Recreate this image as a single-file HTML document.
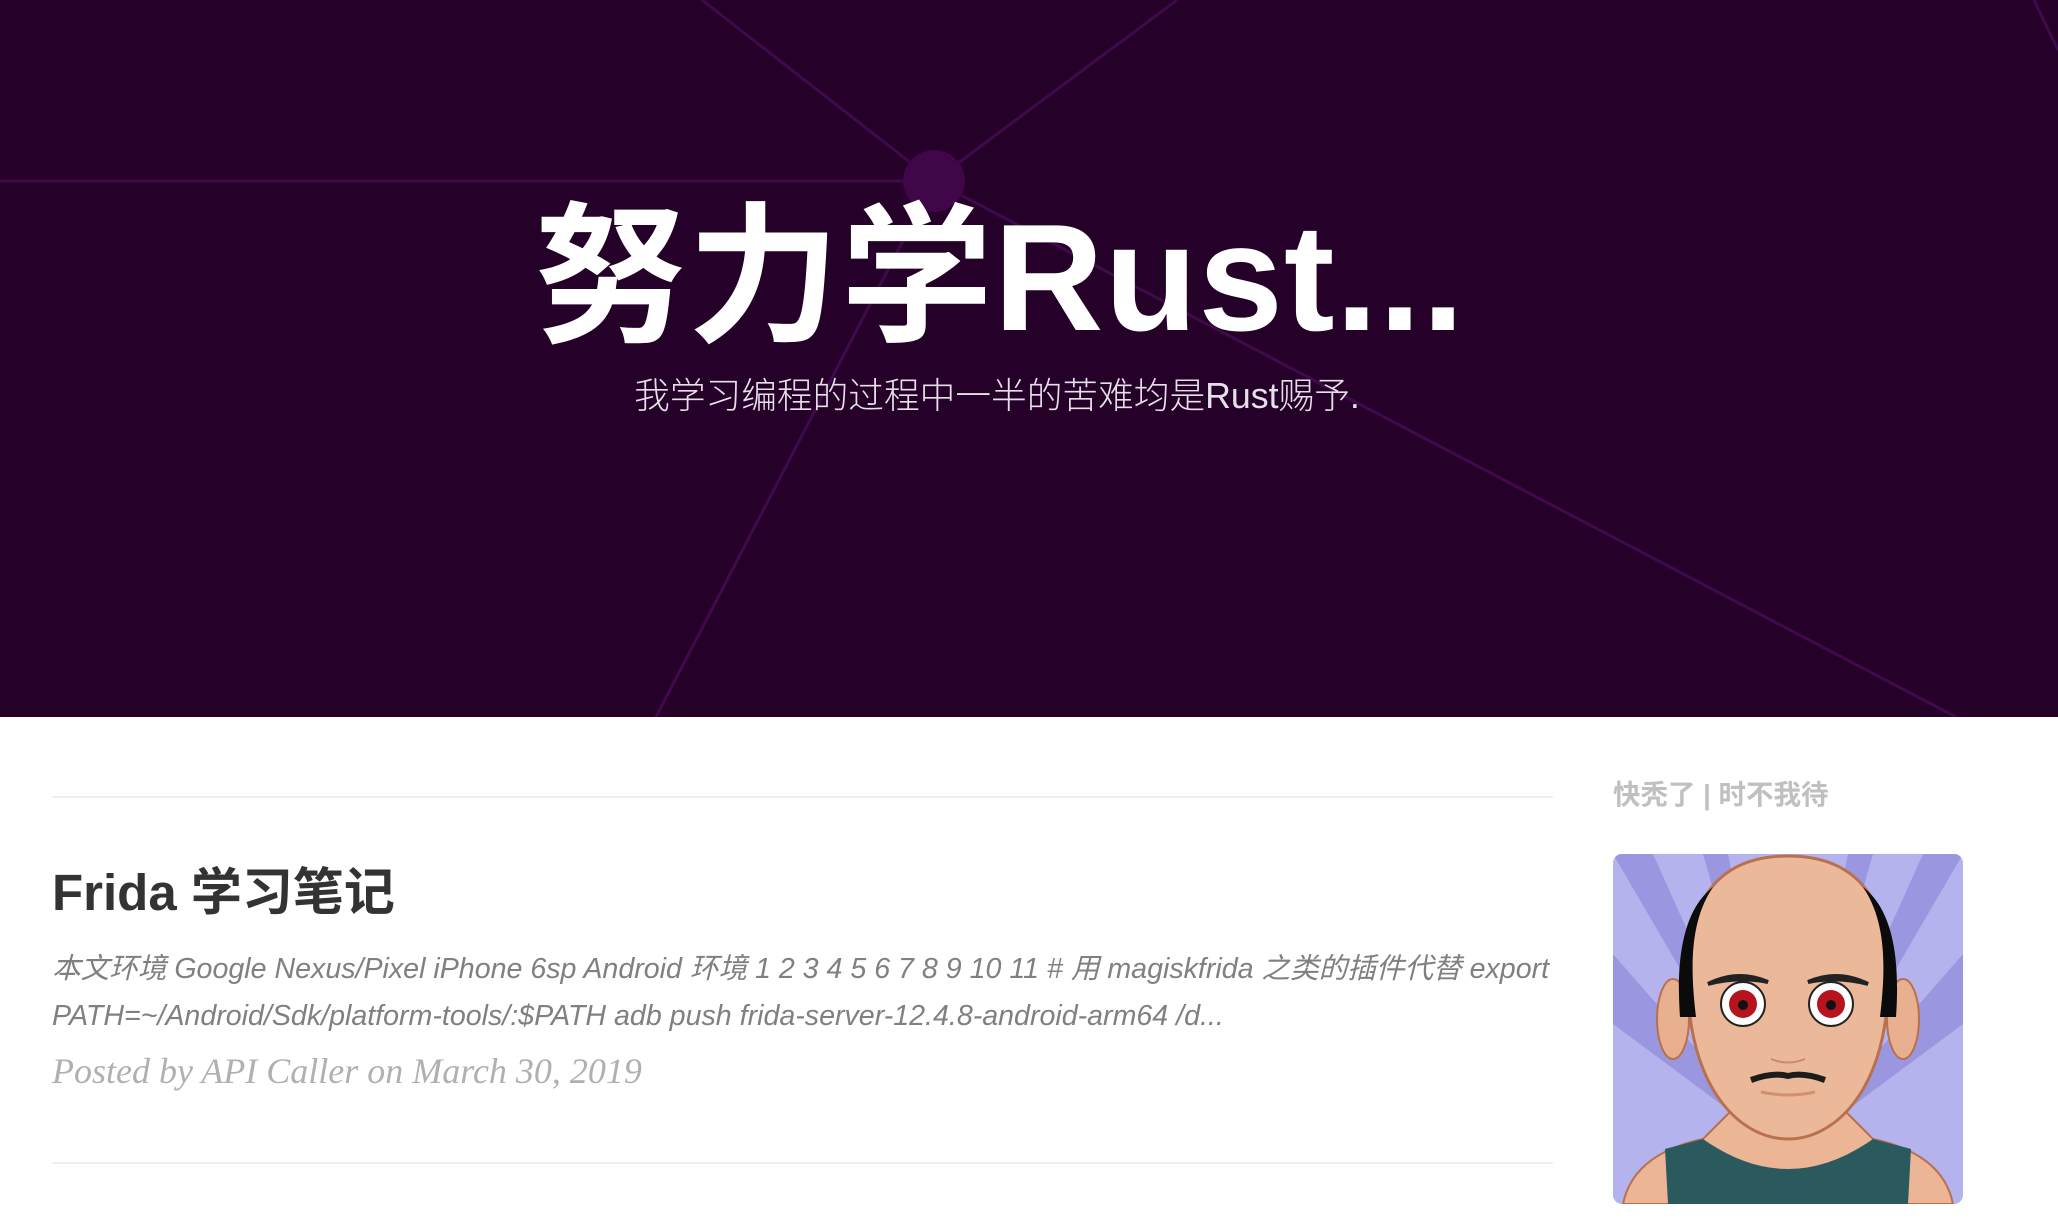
<!DOCTYPE html>
<html><head><meta charset="utf-8"><style>
html,body{margin:0;padding:0;width:2058px;height:1232px;overflow:hidden;background:#fff;font-family:"Liberation Sans","Noto Sans CJK SC",sans-serif}
.hero{position:absolute;left:0;top:0;width:2058px;height:717px;background:#250029;overflow:hidden}
.hero svg{position:absolute;left:0;top:0}
h1{position:absolute;left:-29px;width:2058px;top:188px;margin:0;text-align:center;color:#fff;font-size:152px;font-weight:bold;line-height:180px;letter-spacing:1px}
.sub{position:absolute;left:-32px;width:2058px;top:372px;text-align:center;color:#e6e0e8;font-size:35.7px;font-weight:300;line-height:48px}
hr{position:absolute;left:52px;width:1501px;border:0;border-top:2px solid #eee;margin:0}
.t{position:absolute;left:52px;top:860px;font-size:51px;font-weight:bold;color:#333;line-height:66px}
.ex{position:absolute;left:52px;top:946px;width:1560px;font-size:28.6px;font-style:italic;color:#808080;line-height:47px}
.pb{position:absolute;left:52px;top:1048px;font-family:"Liberation Serif",serif;font-style:italic;font-size:36px;color:#b0b0b0;line-height:46px}
.side{position:absolute;left:1613px;top:772px;font-size:27.5px;font-weight:bold;color:#c0c0c0}
.av{position:absolute;left:1613px;top:854px;width:350px;height:350px;border-radius:9px;overflow:hidden}
</style></head><body>
<div class="hero">
<svg width="2058" height="717"><g stroke="#3f0a4a" stroke-width="3" fill="none">
<line x1="0" y1="181" x2="934" y2="181"/><line x1="702" y1="0" x2="934" y2="181"/><line x1="1177" y1="0" x2="934" y2="181"/><line x1="934" y1="181" x2="656" y2="717"/><line x1="934" y1="181" x2="1956" y2="717"/><line x1="2034" y1="0" x2="2058" y2="50"/></g>
<circle cx="934" cy="181" r="31" fill="#41054a"/></svg>
<h1>努力学Rust...</h1>
<div class="sub">我学习编程的过程中一半的苦难均是Rust赐予.</div>
</div>
<hr style="top:796px">
<div class="t">Frida 学习笔记</div>
<div class="ex">本文环境 Google Nexus/Pixel iPhone 6sp Android 环境 1 2 3 4 5 6 7 8 9 10 11 # 用 magiskfrida 之类的插件代替 export PATH=~/Android/Sdk/platform-tools/:$PATH adb push frida-server-12.4.8-android-arm64 /d...</div>
<div class="pb">Posted by API Caller on March 30, 2019</div>
<hr style="top:1162px">
<div class="side">快秃了 | 时不我待</div>
<div class="av"><svg width="350" height="350" viewBox="0 0 350 350">
<rect width="350" height="350" fill="#b5b3ee"/>
<g fill="#9a97e0"><polygon points="175,300 0,0 40,0"/><polygon points="175,300 90,0 115,0"/><polygon points="175,300 235,0 260,0"/><polygon points="175,300 310,0 350,0"/><polygon points="175,300 0,100 0,170"/><polygon points="175,300 350,100 350,170"/></g>
<path d="M10 350 Q20 300 90 285 L130 245 L220 245 L260 285 Q330 300 340 350Z" fill="#ecb596" stroke="#b8714f" stroke-width="2"/>
<path d="M55 350 L52 295 L90 285 Q175 345 260 285 L298 295 L295 350Z" fill="#2b5a5e"/>
<ellipse cx="60" cy="165" rx="16" ry="40" fill="#e8b08f" stroke="#b8714f" stroke-width="2"/>
<ellipse cx="290" cy="165" rx="16" ry="40" fill="#e8b08f" stroke="#b8714f" stroke-width="2"/>
<path d="M175 2 C95 2 70 60 75 140 C80 240 130 285 175 285 C220 285 270 240 275 140 C280 60 255 2 175 2Z" fill="#ecb89a" stroke="#b8714f" stroke-width="3"/>
<path d="M100 33 C65 60 64 120 67 163 L83 163 C78 120 75 70 100 33Z" fill="#0b0b0b"/>
<path d="M250 33 C285 60 286 120 283 163 L267 163 C272 120 275 70 250 33Z" fill="#0b0b0b"/>
<path d="M95 130 Q125 115 155 128 Q125 122 95 130Z" fill="#222" stroke="#222" stroke-width="4"/>
<path d="M255 130 Q225 115 195 128 Q225 122 255 130Z" fill="#222" stroke="#222" stroke-width="4"/>
<circle cx="130" cy="150" r="22" fill="#fff" stroke="#222" stroke-width="2"/><circle cx="130" cy="150" r="14" fill="#b5141f"/><circle cx="130" cy="151" r="5" fill="#111"/>
<circle cx="218" cy="150" r="22" fill="#fff" stroke="#222" stroke-width="2"/><circle cx="218" cy="150" r="14" fill="#b5141f"/><circle cx="218" cy="151" r="5" fill="#111"/>
<path d="M158 205 Q175 212 192 205" stroke="#c98a6c" stroke-width="2" fill="none"/>
<path d="M138 226 Q160 218 175 222 Q190 218 212 226" stroke="#1c1c1c" stroke-width="6" fill="none"/>
<path d="M148 238 Q175 244 202 238" stroke="#d2906f" stroke-width="3" fill="none"/>
</svg></div>
</body></html>
